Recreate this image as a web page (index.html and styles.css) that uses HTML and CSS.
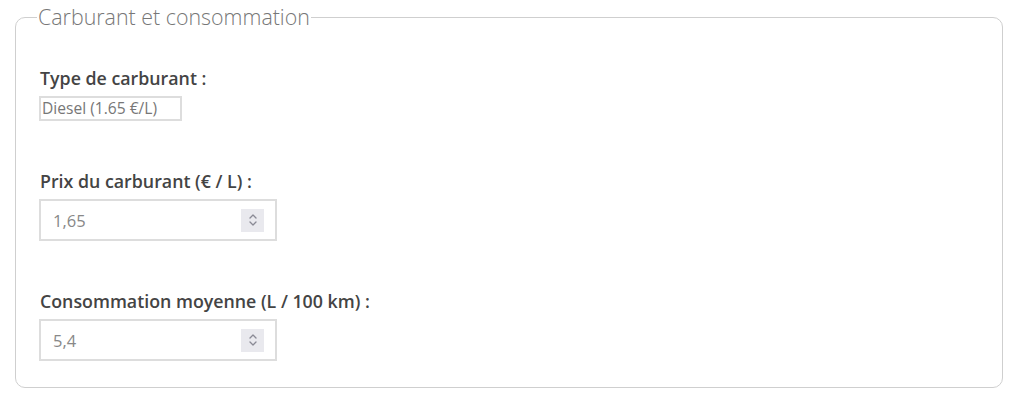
FILE: index.html
```html
<!DOCTYPE html>
<html lang="fr">
  <head>
    <meta charset="UTF-8" />
    <meta name="viewport" content="width=device-width, initial-scale=1.0" />
    <title>Carburant et consommation</title>
    <link rel="stylesheet" href="styles.css">
  </head>
  <body>
    <fieldset class="section">
      <legend>Carburant et consommation</legend>

      <div class="field">
        <label for="fuelType">Type de carburant :</label>
        <select id="fuelType" class="select">
          <option>Diesel (1.65 €/L)</option>
        </select>
      </div>

      <div class="field">
        <label for="fuelPrice">Prix du carburant (€ / L) :</label>
        <div class="number">
          <input type="text" id="fuelPrice" value="1,65" />
          <span class="spin">
            <svg width="10" height="16" viewBox="0 0 10 16">
              <path d="M2 6 L5 3 L8 6 M2 10 L5 13 L8 10" fill="none" stroke="#8a8a95" stroke-width="1.3" stroke-linecap="round" stroke-linejoin="round" />
            </svg>
          </span>
        </div>
      </div>

      <div class="field">
        <label for="consumption">Consommation moyenne (L / 100 km) :</label>
        <div class="number">
          <input type="text" id="consumption" value="5,4" />
          <span class="spin">
            <svg width="10" height="16" viewBox="0 0 10 16">
              <path d="M2 6 L5 3 L8 6 M2 10 L5 13 L8 10" fill="none" stroke="#8a8a95" stroke-width="1.3" stroke-linecap="round" stroke-linejoin="round" />
            </svg>
          </span>
        </div>
      </div>
    </fieldset>
  </body>
</html>
```

FILE: styles.css
```css
* {
  box-sizing: border-box;
}

body {
  margin: 0;
  padding: 5px 21px 0 15px;
  background-color: #fff;
  font-family: "Open Sans", sans-serif;
  color: #444;
}

.section {
  margin: 0;
  height: 383px;
  padding: 0 24px 0 23px;
  border: 1px solid #cfcfcf;
  border-radius: 10px;
}

.section legend {
  margin-left: -2px;
  padding: 0 1px;
  font-size: 21.4px;
  font-weight: 300;
  line-height: 24px;
  color: #777;
}

.field {
  display: flex;
  flex-direction: column;
  align-items: flex-start;
}

.field:first-of-type {
  margin-top: 37px;
}

.field + .field {
  margin-top: 48px;
}

.field label {
  margin-left: 1px;
  margin-bottom: 6px;
  font-size: 17.8px;
  font-weight: 600;
  line-height: 24px;
  color: #444;
}

.select {
  appearance: none;
  width: 143px;
  height: 25px;
  padding: 0 1px;
  border: 2px solid #ddd;
  border-radius: 0;
  background: #fff;
  font-family: "Open Sans", sans-serif;
  font-size: 15.6px;
  line-height: 21px;
  color: #777;
}

.number {
  display: flex;
  align-items: center;
  width: 238px;
  height: 42px;
  padding: 0 11px 0 12px;
  border: 2px solid #ddd;
  background: #fff;
}

.number input {
  flex: 1;
  min-width: 0;
  border: none;
  outline: none;
  padding: 0;
  font-family: "Open Sans", sans-serif;
  font-size: 16.5px;
  color: #888;
}

.spin {
  display: flex;
  align-items: center;
  justify-content: center;
  width: 23px;
  height: 23px;
  background: #e9e9ee;
}
```
